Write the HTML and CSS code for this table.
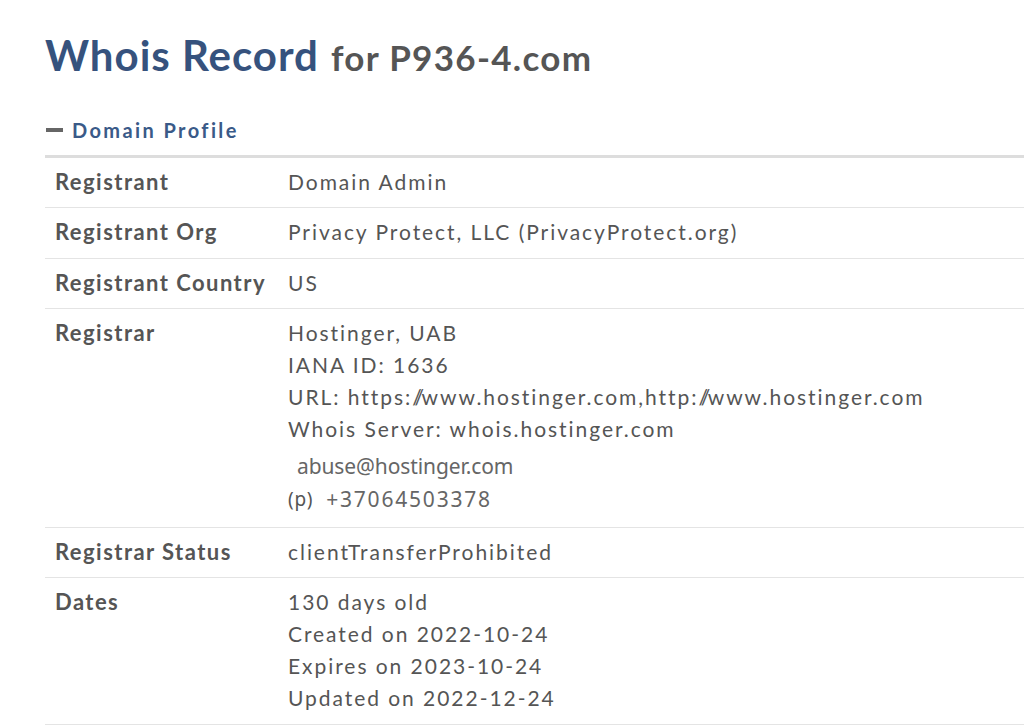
FILE: index.html
```html
<!DOCTYPE html>
<html>
<head>
<meta charset="utf-8">
<link rel="stylesheet" href="styles.css">
</head>
<body>
<div class="page">
  <h1 class="title"><span class="title-main">Whois Record</span><small class="title-sub">for P936-4.com</small></h1>
  <div class="section-head"><span class="minus"></span><span class="section-name">Domain Profile</span></div>
  <div class="table">
    <div class="row">
      <div class="label">Registrant</div>
      <div class="value">Domain Admin</div>
    </div>
    <div class="row">
      <div class="label">Registrant Org</div>
      <div class="value">Privacy Protect, LLC (PrivacyProtect.org)</div>
    </div>
    <div class="row">
      <div class="label">Registrant Country</div>
      <div class="value">US</div>
    </div>
    <div class="row">
      <div class="label">Registrar</div>
      <div class="value">
        <div>Hostinger, UAB</div>
        <div>IANA ID: 1636</div>
        <div>URL: https:<span class="sl">//</span>www.hostinger.com,http:<span class="sl">//</span>www.hostinger.com</div>
        <div>Whois Server: whois.hostinger.com</div>
        <div class="img-text email">abuse@hostinger.com</div>
        <div class="phone"><span class="p">(p)</span><span class="img-text phone-num">+37064503378</span></div>
      </div>
    </div>
    <div class="row">
      <div class="label">Registrar Status</div>
      <div class="value">clientTransferProhibited</div>
    </div>
    <div class="row">
      <div class="label">Dates</div>
      <div class="value">
        <div>130 days old</div>
        <div>Created on 2022-10-24</div>
        <div>Expires on 2023-10-24</div>
        <div>Updated on 2022-12-24</div>
      </div>
    </div>
  </div>
</div>
</body>
</html>
```

FILE: styles.css
```css
html, body {
  margin: 0;
  padding: 0;
  background: #fff;
}
body {
  font-family: Lato, "Open Sans", sans-serif;
  color: #555;
  overflow: hidden;
}
.page {
  padding: 28px 0 0 45px;
}
.title {
  margin: 0;
  font-weight: 700;
  line-height: 54px;
  display: flex;
  align-items: baseline;
}
.title-main {
  font-size: 42px;
  letter-spacing: 1px;
  color: #36527d;
}
.title-sub {
  margin-left: 12px;
  font-size: 35px;
  letter-spacing: 1.3px;
  color: #555;
  font-weight: 700;
}
.section-head {
  display: flex;
  align-items: center;
  margin-top: 34px;
  height: 24px;
}
.minus {
  width: 17px;
  height: 4px;
  background: #666;
  margin-left: 1px;
  margin-right: 9px;
}
.section-name {
  color: #3a5a88;
  font-size: 20px;
  font-weight: 700;
  letter-spacing: 2.4px;
}
.table {
  margin-top: 13px;
  border-top: 3px solid #ddd;
}
.row {
  display: flex;
  border-bottom: 1px solid #e4e4e4;
  padding: 8px 0 9.3px;
}
.label {
  width: 223px;
  padding-left: 10px;
  flex: none;
  font-weight: 700;
  font-size: 22px;
  line-height: 32px;
  letter-spacing: 1.45px;
  color: #555;
}
.value {
  padding-left: 10px;
  font-size: 21px;
  line-height: 32px;
  letter-spacing: 1.95px;
  color: #555;
}
.sl {
  letter-spacing: -2.5px;
}
.img-text {
  font-family: "Noto Sans", sans-serif;
  font-size: 21px;
  letter-spacing: 0;
  color: #666;
}
.email {
  padding-left: 9px;
  line-height: 32px;
  margin-top: 5px;
  letter-spacing: -0.1px;
}
.phone {
  display: flex;
  align-items: center;
  line-height: 32px;
  margin-top: 1px;
  margin-bottom: 3px;
}
.p {
  font-family: "Noto Sans", sans-serif;
  font-size: 19px;
  color: #555;
  margin-right: 13px;
  letter-spacing: 0.7px;
}
.phone-num {
  letter-spacing: 1.8px;
}
```
